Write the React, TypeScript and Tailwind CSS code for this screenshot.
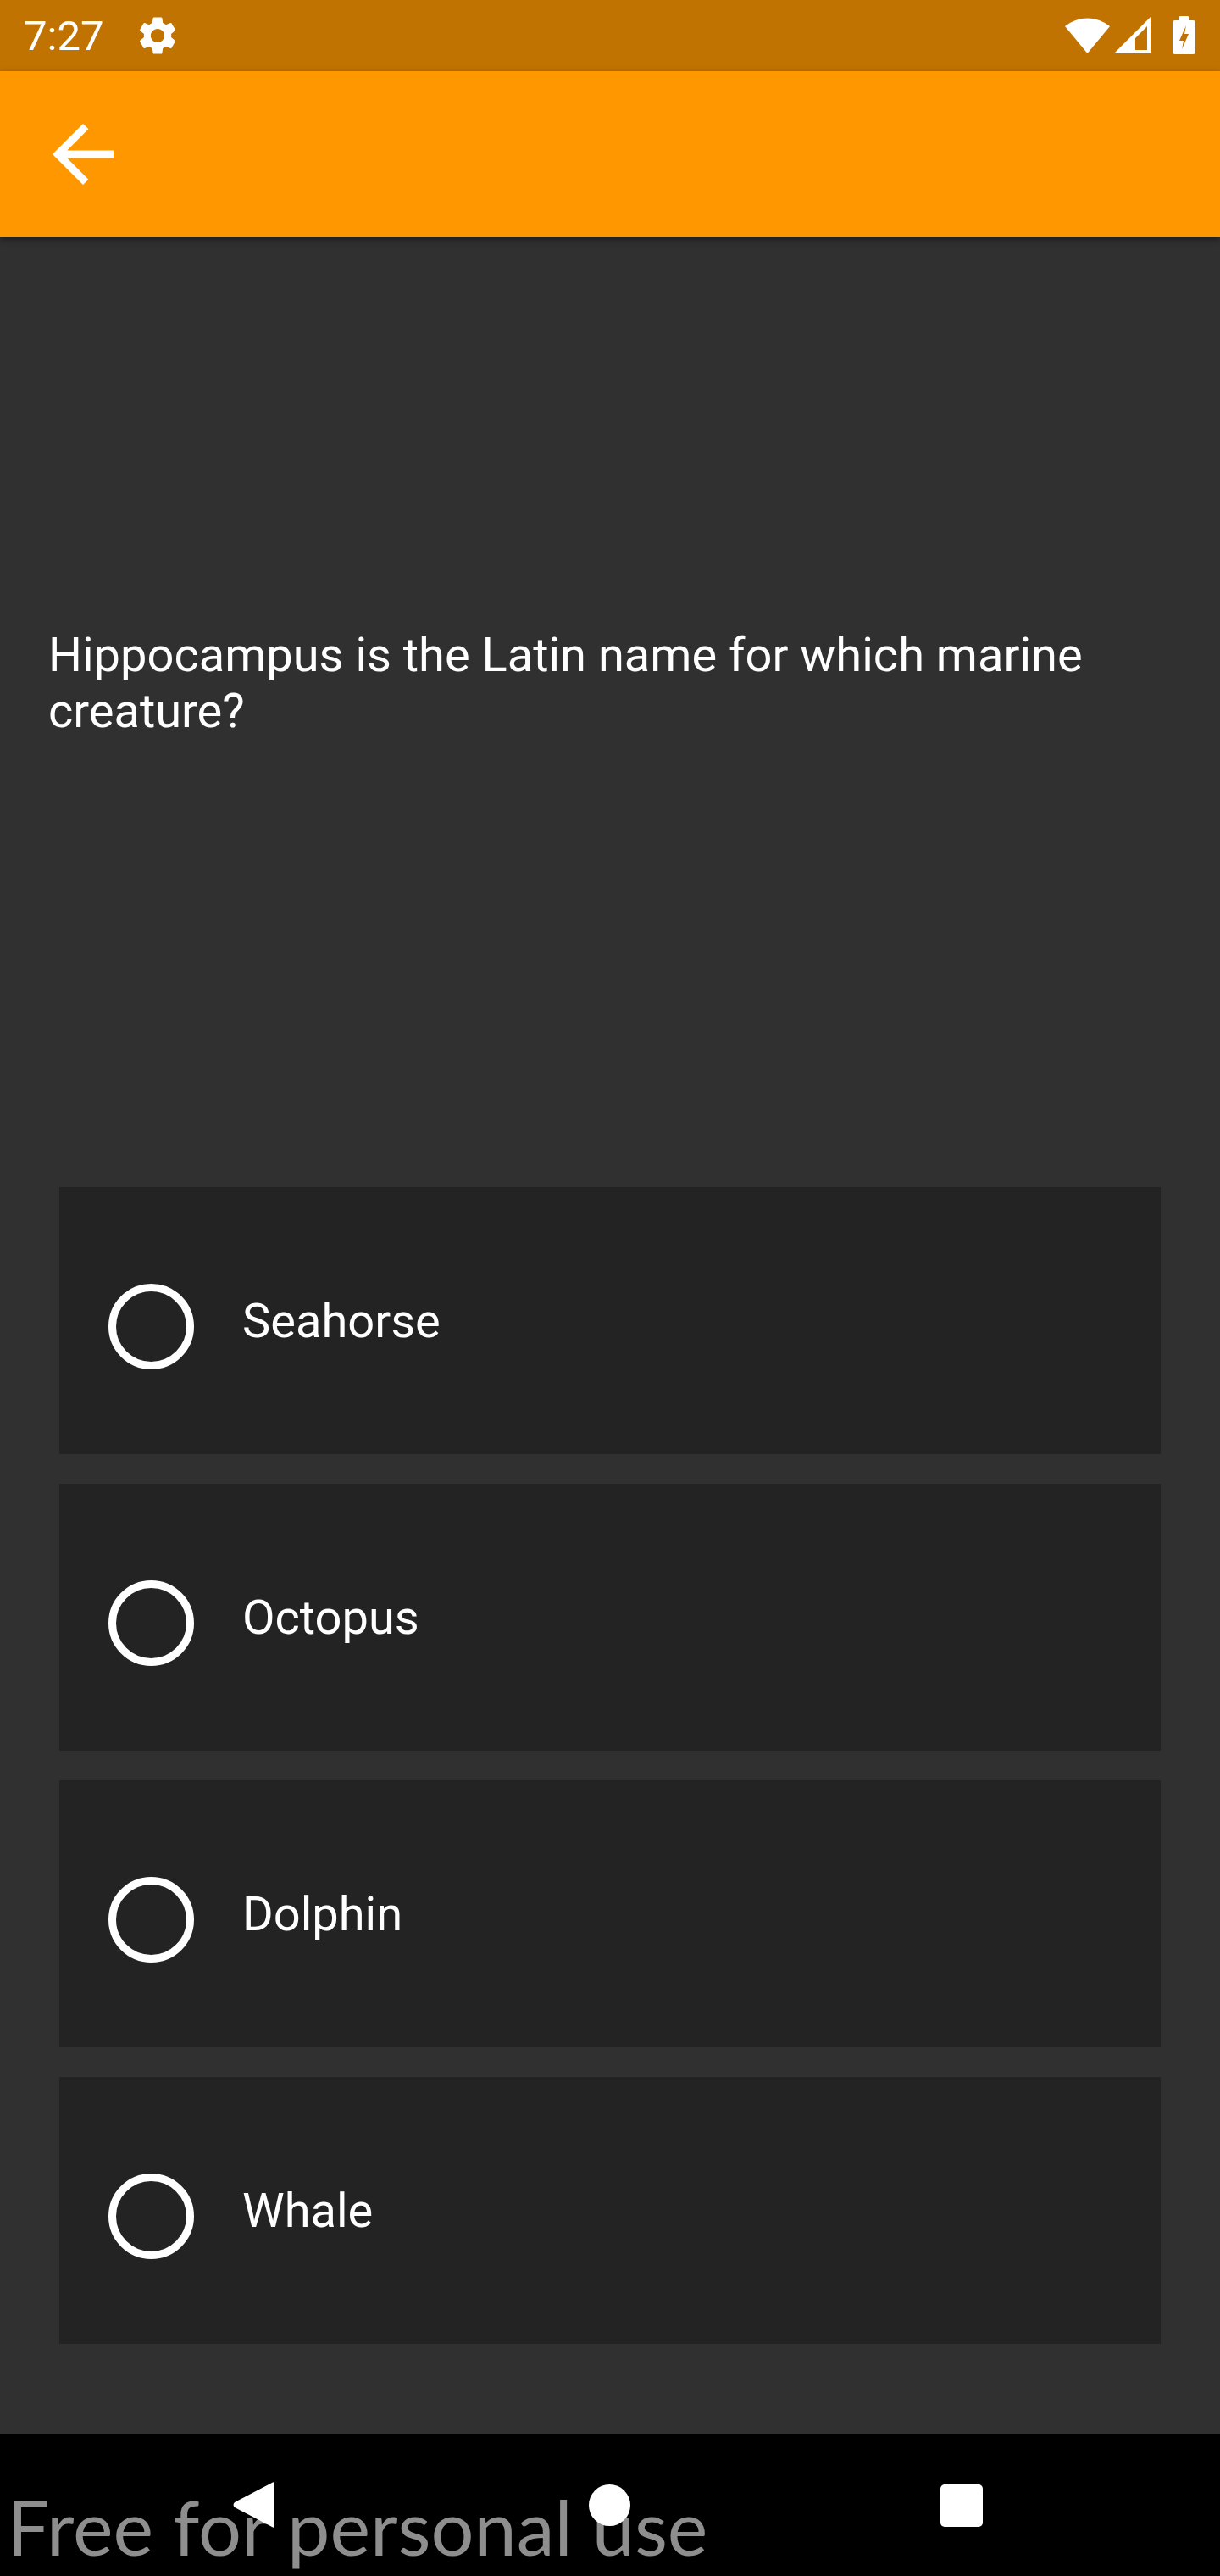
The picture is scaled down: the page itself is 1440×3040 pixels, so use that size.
import React from "react";

const options = ["Seahorse", "Octopus", "Dolphin", "Whale"];

function StatusBar() {
    return (
        <div className="h-[84px] bg-[#c07300] flex items-center justify-between pl-[28px] pr-[28px] text-white">
            <div className="flex items-center">
                <span className="text-[49px] leading-[57px] font-['Roboto',sans-serif]">7:27</span>
                <svg className="ml-[37px] w-[54px] h-[54px]" viewBox="0 0 24 24" fill="white">
                    <path d="M19.14 12.94c.04-.3.06-.61.06-.94 0-.32-.02-.64-.07-.94l2.03-1.58c.18-.14.23-.41.12-.61l-1.92-3.32c-.12-.22-.37-.29-.59-.22l-2.39.96c-.5-.38-1.03-.7-1.62-.94l-.36-2.54c-.04-.24-.24-.41-.48-.41h-3.84c-.24 0-.43.17-.47.41l-.36 2.54c-.59.24-1.130.57-1.62.94l-2.39-.96c-.22-.08-.47 0-.59.22L2.74 8.87c-.12.21-.08.47.12.61l2.03 1.58c-.05.3-.09.63-.09.94s.02.64.07.94l-2.03 1.58c-.18.14-.23.41-.12.61l1.92 3.32c.12.22.37.29.59.22l2.39-.96c.5.38 1.03.7 1.62.94l.36 2.54c.05.24.24.41.48.41h3.84c.24 0 .44-.17.47-.41l.36-2.54c.59-.24 1.13-.56 1.62-.94l2.39.96c.22.08.47 0 .59-.22l1.92-3.32c.12-.22.07-.47-.12-.61l-2.01-1.58zM12 15.6c-1.98 0-3.6-1.62-3.6-3.6s1.62-3.6 3.6-3.6 3.6 1.62 3.6 3.6-1.62 3.6-3.6 3.6z" />
                </svg>
            </div>
            <div className="flex items-center">
                {/* wifi */}
                <svg className="w-[54px] h-[46px]" viewBox="0 0 54 46" fill="white">
                    <path d="M26.5 44 L0 12 A42 42 0 0 1 53 12 Z" />
                </svg>
                {/* signal */}
                <svg className="ml-[4px] w-[44px] h-[44px]" viewBox="0 0 44 44" fill="white">
                    <path d="M0 43 L43 0 L43 43 Z M25 25 L39 11 L39 39 L25 39 Z" fillRule="evenodd" />
                </svg>
                {/* battery */}
                <svg className="ml-[25px] w-[28px] h-[46px]" viewBox="0 0 28 46" fill="white">
                    <rect x="8" y="0" width="11" height="6" rx="1" />
                    <rect x="0" y="5" width="27" height="40" rx="3" />
                    <path d="M16 11 L8 29 L13 29 L11 39 L19 21 L14 21 Z" fill="#c07300" />
                </svg>
            </div>
        </div>
    );
}

function AppBar() {
    return (
        <div className="relative z-10 h-[196px] bg-[#ff9800] flex items-center shadow-[0_3px_8px_rgba(0,0,0,0.4)]">
            <svg className="ml-[44px] w-[108px] h-[108px]" viewBox="0 0 24 24" fill="white">
                <path d="M20 11H7.83l5.59-5.59L12 4l-8 8 8 8 1.41-1.41L7.83 13H20v-2z" />
            </svg>
        </div>
    );
}

function Option({ label }: { label: string }) {
    return (
        <div className="h-[315px] bg-[#232323] flex items-center pl-[58px]">
            <div className="mt-[14px] w-[101px] h-[101px] rounded-full border-[9px] border-white shrink-0" />
            <span className="ml-[57px] text-white text-[56px] leading-[66px] font-['Roboto',sans-serif]">
                {label}
            </span>
        </div>
    );
}

function NavBar() {
    return (
        <div className="relative h-[168px] bg-black overflow-hidden">
            <div className="absolute left-[8px] top-[56px] text-[90px] leading-[106px] text-[#8e8e8e] font-['Lato',sans-serif] whitespace-nowrap [text-shadow:0_2px_3px_rgba(0,0,0,0.6)]">
                Free for personal use
            </div>
            <div className="relative z-10 h-full">
                <svg className="absolute left-[274px] top-[56px] w-[52px] h-[56px]" viewBox="0 0 52 56" fill="white">
                    <path d="M50 4 Q50 0 47 2 L3 25 Q0 28 3 31 L47 54 Q50 56 50 52 Z" />
                </svg>
                <div className="absolute left-[695px] top-[60px] w-[49px] h-[49px] rounded-full bg-white" />
                <div className="absolute left-[1110px] top-[60px] w-[50px] h-[50px] rounded-[5px] bg-white" />
            </div>
        </div>
    );
}

export default function App() {
    return (
        <div className="w-[1440px] h-[3040px] flex flex-col bg-[#303030] font-['Roboto',sans-serif]">
            <StatusBar />
            <AppBar />
            <div className="flex-1 flex flex-col">
                <p className="pt-[460px] pl-[57px] pr-[56px] text-white text-[56px] leading-[66px]">
                    Hippocampus is the Latin name for which marine creature?
                </p>
                <div className="mt-[529px] px-[70px] flex flex-col gap-[35px]">
                    {options.map((o) => (
                        <Option key={o} label={o} />
                    ))}
                </div>
            </div>
            <NavBar />
        </div>
    );
}
